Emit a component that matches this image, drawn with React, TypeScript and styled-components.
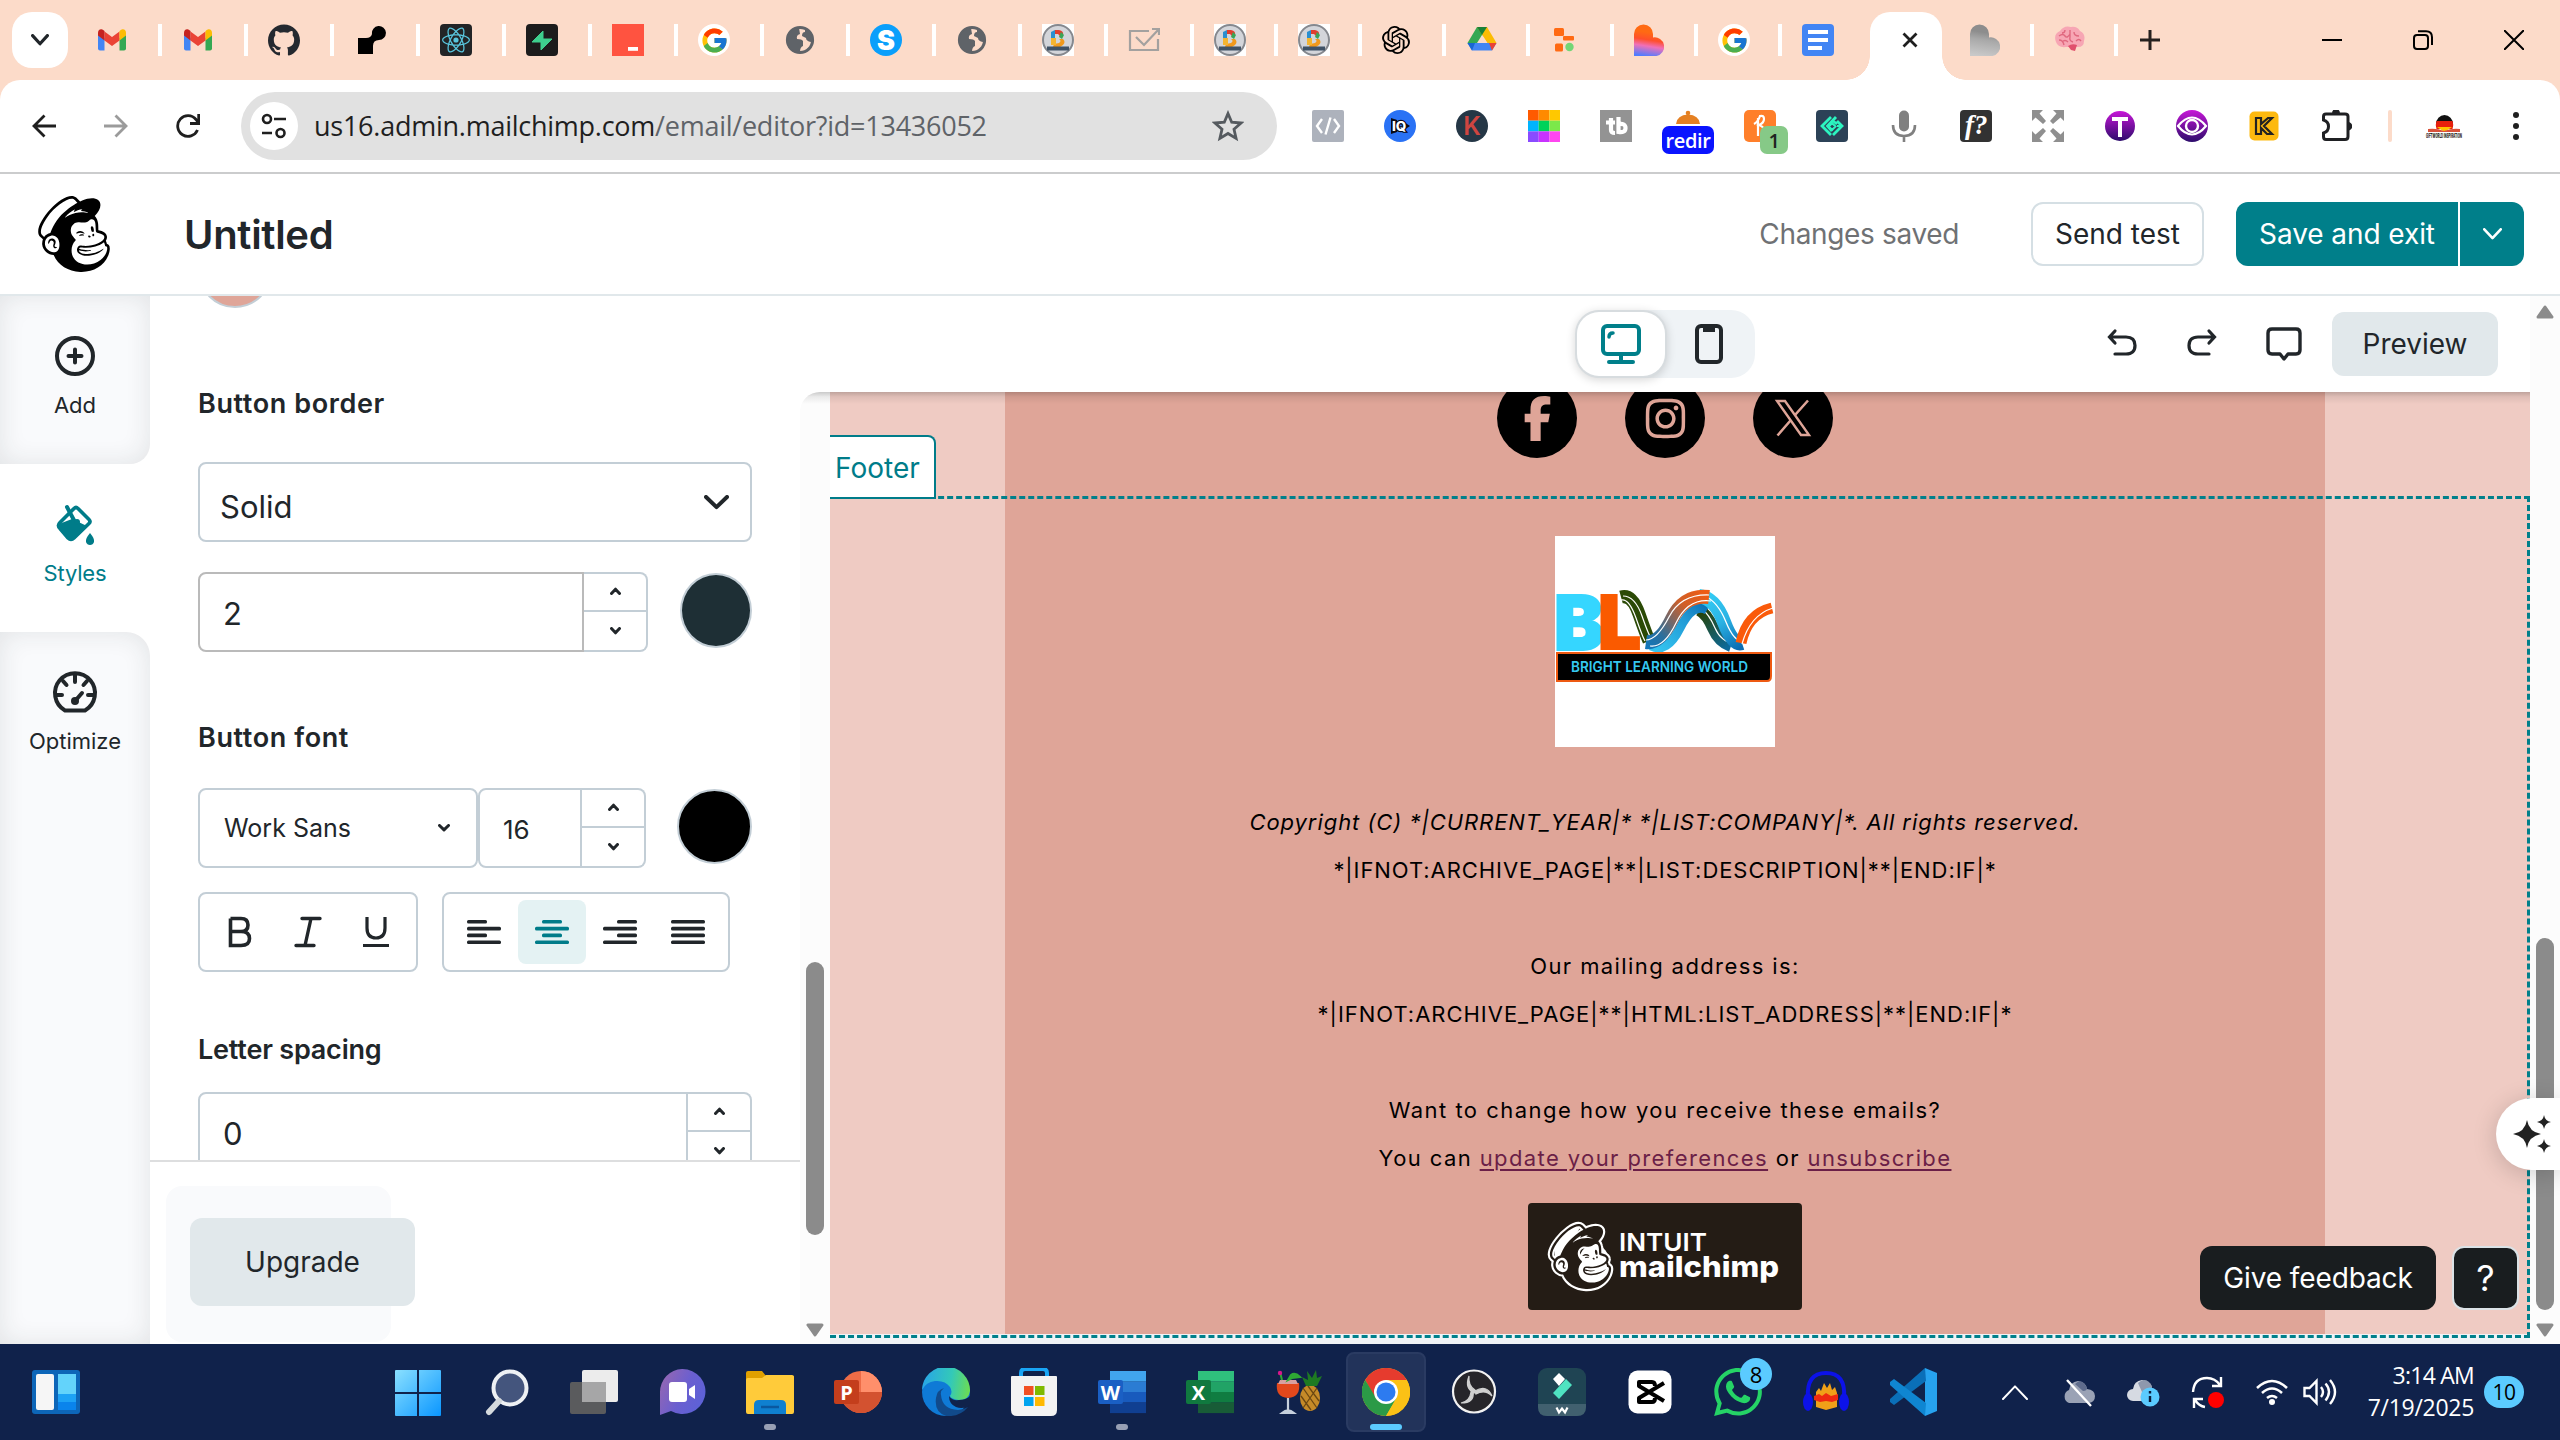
import React from 'react';
import styled, { createGlobalStyle, css } from 'styled-components';
import { FaFacebookF, FaInstagram } from 'react-icons/fa6';
import { FcGoogle } from 'react-icons/fc';
import { SiMailchimp, SiGithub, SiReact, SiOpenai, SiWhatsapp } from 'react-icons/si';

const ui = `Inter, "Liberation Sans", sans-serif`;
const sys = `"Open Sans", "Noto Sans", sans-serif`;
const teal = '#007c89';
const ink = '#21262a';
const line = '#c3ced6';
const peach = '#fcdbc9';

const Global = createGlobalStyle`
  * { box-sizing: border-box; }
  html, body { margin: 0; padding: 0; background: #fff; overflow: hidden; }
  svg { display: block; flex: none; }
`;

const Page = styled.div`
  width: 2560px;
  height: 1440px;
  display: flex;
  flex-direction: column;
  overflow: hidden;
  background: #fff;
  color: ${ink};
  font-family: ${ui};
`;

const Label = styled.span<{ $size: number; $ls?: number; $weight?: number; $color?: string }>`
  font-size: ${p => p.$size}px;
  letter-spacing: ${p => p.$ls ?? 0}px;
  font-weight: ${p => p.$weight ?? 400};
  color: ${p => p.$color ?? 'inherit'};
  white-space: nowrap;
`;

/* ---------- browser tabs ---------- */

const TabStrip = styled.div`
  display: flex;
  align-items: center;
  height: 80px;
  flex: none;
  background: ${peach};
  padding-left: 12px;
`;

const TabSearch = styled.div`
  width: 56px;
  height: 56px;
  border-radius: 20px;
  background: #fff;
  display: flex;
  align-items: center;
  justify-content: center;
  margin-right: 8px;
`;

const Tab = styled.div<{ $w: number; $last?: boolean }>`
  width: ${p => p.$w}px;
  height: 32px;
  flex: none;
  padding-left: 20px;
  display: flex;
  align-items: center;
  border-right: 4px solid ${p => (p.$last ? 'transparent' : '#fff')};
`;

const ActiveTab = styled.div`
  position: relative;
  align-self: flex-end;
  width: 72px;
  height: 68px;
  flex: none;
  margin: 0 8px 0 4px;
  padding-left: 8px;
  background: #fff;
  border-radius: 20px 20px 0 0;
  display: flex;
  align-items: center;
  justify-content: center;
  padding-bottom: 12px;
  &::before, &::after {
    content: '';
    position: absolute;
    bottom: 0;
    width: 24px;
    height: 24px;
  }
  &::before { left: -24px; background: radial-gradient(circle at 0 0, transparent 23.5px, #fff 24px); }
  &::after { right: -24px; background: radial-gradient(circle at 100% 0, transparent 23.5px, #fff 24px); }
`;

const NewTab = styled.div`
  margin-left: 22px;
`;

const WindowControls = styled.div`
  margin-left: auto;
  margin-right: 36px;
  display: flex;
  gap: 71px;
`;

const Favicon = styled.div<{ $bg?: string; $r?: number }>`
  width: 32px;
  height: 32px;
  flex: none;
  border-radius: ${p => p.$r ?? 4}px;
  background: ${p => p.$bg ?? 'transparent'};
  display: flex;
  align-items: center;
  justify-content: center;
  overflow: hidden;
`;

const Svg = ({ s = 32, h, vb = '0 0 32 32', children }: any) => (
  <svg width={s} height={h ?? s} viewBox={vb} fill="none">{children}</svg>
);

const Gmail = () => (
  <Svg>
    <path d="M2 9v15.500q0 2 2 2h4.500V14z" fill="#4285f4" />
    <path d="M30 9v15.500q0 2-2 2h-4.500V14z" fill="#34a853" />
    <path d="M8.500 7.500 16 13l7.500-5.500v9L16 22l-7.500-5.500z" fill="#ea4335" />
    <path d="M2 9Q2 5 5.500 5.200q1.300.1 3 1.800v9.500L2 11.500z" fill="#c5221f" />
    <path d="M30 9q0-4-3.500-3.800-1.300.1-3 1.800v9.500l6.500-5z" fill="#fbbc04" />
  </Svg>
);

const Globe = () => (
  <Svg>
    <circle cx="16" cy="16" r="12.600" fill="none" stroke="#5f6368" strokeWidth="3" />
    <path d="M4 18q-1-12 11-14l1 6q-4 1-3 5 5 0 6 2v5q-3 1-3 6-9 1-12-10zM21 5q8 3 8 11l-2 2q-5-1-5-4l-4-2q0-4 3-4z" fill="#5f6368" />
  </Svg>
);

const Coin = () => (
  <Favicon $bg="#fff" $r={0}>
    <Svg>
      <circle cx="16" cy="16" r="15" fill="#d3d5da" stroke="#85888e" strokeWidth="2" />
      <path d="M9 8l4-2v15H9z" fill="#2a8fd0" />
      <path d="M13 6h4q5 1 4 5l-2 2-3-3h-3z" fill="#e03f2e" />
      <path d="M19 8l3 3-2 4-3-2z" fill="#3aa557" />
      <path d="M12 20l5-1q3-2 0-4h4q3 3 0 6l-3 2h-7z" fill="#f0991d" />
      <path d="M9 14h5v7H9z" fill="#f3b431" />
      <rect x="5" y="22.500" width="22" height="4" fill="#3f5266" />
    </Svg>
  </Favicon>
);

const Drive = () => (
  <Svg>
    <path d="M11 3h10l-5 9-7.500 14L1.500 19z" fill="#34a853" />
    <path d="M11 3h10l9.500 16h-9z" fill="#fbbc04" />
    <path d="M1.500 19h29L26 26.500H6z" fill="#4285f4" />
    <path d="M23 19h7.500L26 26.500z" fill="#ea4335" />
    <path d="M16 11l5 8H11z" fill={peach} />
    <path d="M1.500 19H9l-3 7.500z" fill="#1967d2" />
    <path d="M11 3h10l-5 8z" fill="#188038" />
  </Svg>
);

const Heart = ({ gray }: { gray?: boolean }) => (
  <Svg>
    <defs>
      <linearGradient id={gray ? 'hg' : 'hc'} x1="0.500" y1="0" x2="0.350" y2="1">
        <stop offset="0.250" stopColor={gray ? '#8d8d8d' : '#ff6a13'} />
        <stop offset="0.480" stopColor={gray ? '#a8a8a8' : '#ff4f2b'} />
        <stop offset="0.680" stopColor={gray ? '#b5b5b5' : '#f070b8'} />
        <stop offset="1" stopColor={gray ? '#c9c9c9' : '#4f7cff'} />
      </linearGradient>
    </defs>
    <path d="M0 32V10a9.500 9.500 0 0 1 19 0v3.500a9.400 9.400 0 0 1 3.500 18.500z" fill={`url(#${gray ? 'hg' : 'hc'})`} />
  </Svg>
);

const favicons: Record<string, React.ReactNode> = {
  gmail: <Gmail />,
  github: <SiGithub size={32} color="#24292f" />,
  resume: <Svg><path d="M4 14h8q5 0 6-4a7 7 0 1 1 7 6q-6 0-6 6v8H4z" fill="#000" /></Svg>,
  react: <Favicon $bg="#222426"><SiReact size={28} color="#58c4dc" /></Favicon>,
  supa: <Favicon $bg="#1c1c1c"><Svg><path d="M17 7v8h9L15 26v-8H6z" fill="#3ecf8e" stroke="#3ecf8e" strokeWidth="1" strokeLinejoin="round" /></Svg></Favicon>,
  red: <Favicon $bg="#ff5340" $r={0}><Svg><path d="M16 23h10v3.800H16z" fill="#fff" /></Svg></Favicon>,
  google: <Favicon $bg="#fff" $r={16}><FcGoogle size={29} /></Favicon>,
  globe: <Globe />,
  s: <Favicon $bg="#0a9ffb" $r={16}><Label $size={27} $weight={900} $color="#fff">S</Label></Favicon>,
  coin: <Coin />,
  check: <Svg><path d="M21 7H2v19h28V15M8 13l8 8L31 5M24 5h7v6" stroke="#a3a19f" strokeWidth="2.200" /></Svg>,
  gpt: <SiOpenai size={28} color="#000" />,
  drive: <Drive />,
  hub: <Svg><rect x="4" y="4" width="10" height="8" rx="1.500" fill="#ff6a13" /><rect x="13" y="12" width="11" height="4.500" rx="1" fill="#ff6a13" /><rect x="5" y="19.500" width="8" height="8" rx="1.500" fill="#ff6a13" /><circle cx="19.500" cy="23" r="4.200" fill="#72d676" /></Svg>,
  heart: <Heart />,
  docs: <Favicon $bg="#4285f4"><Svg><path d="M6 8h20M6 16h20M6 24h14" stroke="#fff" strokeWidth="4" /></Svg></Favicon>,
};

const wideTabs = ['gmail', 'gmail', 'github', 'resume', 'react', 'supa', 'red', 'google', 'globe', 's', 'globe', 'coin', 'check'];
const narrowTabs = ['coin', 'coin', 'gpt', 'drive', 'hub', 'heart', 'google', 'docs'];

const Brain = () => (
  <Svg>
    <path d="M2 18Q-1 10 6 7q4-6 11-4 6-1 9 4 6 3 4 10 0 6-6 6H12Q4 24 2 18z" fill="#f7a6b4" />
    <path d="M14 22q4-3 9-1l-2 6-4-1z" fill="#e0506d" />
    <path d="M5 12q4-3 6 0t5-2M8 18q3-3 6 0M16 6v7q-1 4 3 5M20 8q0 4 5 4M22 17q3-3 5 0M11 6q0 3-3 3M5 16q4 0 5 5" stroke="#e0687f" strokeWidth="1.400" />
  </Svg>
);

/* ---------- address toolbar ---------- */

const ToolbarBack = styled.div`
  flex: none;
  background: ${peach};
`;

const Toolbar = styled.div`
  height: 94px;
  background: #fff;
  border-bottom: 2px solid #cbcccd;
  border-radius: 20px 20px 0 0;
  padding: 0 41px 0 32px;
  display: flex;
  align-items: center;
`;

const NavButtons = styled.div`
  display: flex;
  gap: 48px;
`;

const AddressBar = styled.div`
  width: 1036px;
  height: 68px;
  margin-left: 41px;
  border-radius: 34px;
  background: #e1e1e1;
  display: flex;
  align-items: center;
  padding: 0 33px 0 9px;
  font-family: ${sys};
`;

const SiteInfo = styled.div`
  width: 48px;
  height: 48px;
  border-radius: 50%;
  background: #fff;
  display: flex;
  align-items: center;
  justify-content: center;
  margin-right: 16px;
`;

const Url = styled.span`
  font-size: 27px;
  letter-spacing: -0.25px;
  color: #5f6368;
  flex: 1;
  padding-bottom: 2px;
  b { font-weight: 400; color: #1f1f1f; }
`;

const Extensions = styled.div`
  display: flex;
  gap: 40px;
  margin-left: 35px;
`;

const Ext = styled.div`
  position: relative;
  width: 32px;
  height: 32px;
`;

const ExtBadge = styled.span<{ $left: number; $w: number; $bg: string; $color: string }>`
  position: absolute;
  top: 16px;
  left: ${p => p.$left}px;
  width: ${p => p.$w}px;
  height: 28px;
  border-radius: 7px;
  background: ${p => p.$bg};
  color: ${p => p.$color};
  font: 600 20px/29px ${sys};
  letter-spacing: -0.4px;
  text-align: center;
`;

const ToolbarRule = styled.div`
  width: 4px;
  height: 32px;
  border-radius: 2px;
  background: ${peach};
  margin: 0 33px 0 36px;
`;

const rainbow = ['#ff5a00', '#ff8a00', '#ffc800', '#00b4ff', '#00d25a', '#7be84a', '#8a4bff', '#c832ff', '#ff46f0'];

const exts: React.ReactNode[] = [
  <Favicon $bg="#adb2bc" $r={2}><Svg><path d="M10 9 5 16l5 7M22 9l5 7-5 7M18.500 7.500l-5 17" stroke="#fff" strokeWidth="2.400" /></Svg></Favicon>,
  <Favicon $bg="#2a72f5" $r={16}><Svg><path d="M7 8v16l6-2V10zM20 12l6 4-6 4z" fill="#0a0a14" /><text x="8" y="21" fontFamily={ui} fontWeight="800" fontSize="13.500" fill="#fff" stroke="#0a0a14" strokeWidth="2.400" paintOrder="stroke">IQ</text></Svg></Favicon>,
  <Favicon $bg="#253746" $r={16}><Label $size={25} $weight={600} $color="#cf4540">K</Label></Favicon>,
  <Svg>{rainbow.map((c, i) => <rect key={c} x={(i % 3) * 10.670} y={Math.floor(i / 3) * 10.670} width="10.700" height="10.700" fill={c} />)}</Svg>,
  <Favicon $bg="#939393" $r={0}><Svg><path d="M11 8v12q0 3 4 3M6 12.500h9M18.500 7v15q7 1 7-4t-7-4" stroke="#fff" strokeWidth="4.200" /></Svg></Favicon>,
  <><Svg><path d="M4 14Q5 5 16 4.500 27 5 28 14z" fill="#e58022" /><circle cx="16" cy="3" r="2.300" fill="#e58022" /></Svg><ExtBadge $left={-10} $w={52} $bg="#0a14ff" $color="#fff">redir</ExtBadge></>,
  <><Favicon $bg="#ff7f2a" $r={5}><Svg><path d="M10 14q4-2 6-8 4-1 4 3t-5 6q6 2 5 7M14 8v18" stroke="#fff" strokeWidth="2.200" /></Svg></Favicon><ExtBadge $left={16} $w={28} $bg="#86c987" $color="#1f2420">1</ExtBadge></>,
  <Favicon $bg="#2c4257" $r={4}><Svg><path d="M15 7 6 16l9 9M20 7l-8.500 9 4.500 5M17 25l9-9-5-5M21 14l-4-3" stroke="#2cf5c0" strokeWidth="2.800" /><path d="M16 13l3.500 3.500L16 20l-3-3.500zM21 16h6" stroke="#2cf5c0" strokeWidth="2" /></Svg></Favicon>,
  <Svg><rect x="11" y="0.500" width="10" height="21" rx="5" fill="#808080" /><path d="M5 15q0 11 11 11t11-11M16 26v6" stroke="#808080" strokeWidth="2.600" /></Svg>,
  <Favicon $bg="#323232" $r={4}><Svg><text x="5" y="24" fontFamily='"Liberation Serif", serif' fontStyle="italic" fontWeight="700" fontSize="27" fill="#fff">f?</text></Svg></Favicon>,
  <Svg><path d="M0 0h11L7.500 3.500 14 11l-3 3-7.500-6.500L0 11zM32 0v11l-3.500-3.500L21 14l-3-3 6.500-7.500L21 0zM0 32V21l3.500 3.500L11 18l3 3-6.500 7.500L11 32zM32 32H21l3.500-3.500L18 21l3-3 7.500 6.500L32 21z" fill="#8f8f8f" /></Svg>,
  <Svg><defs><linearGradient id="pu" x1="0" y1="0" x2="0" y2="1"><stop stopColor="#c716d8" /><stop offset="1" stopColor="#2c0c6b" /></linearGradient></defs><circle cx="16" cy="16" r="15" fill="url(#pu)" /><path d="M8 9h16M16 9v18" stroke="#fff" strokeWidth="4" /></Svg>,
  <Svg><circle cx="16" cy="16" r="16" fill="url(#pu)" /><path d="M2 16Q9 7.500 16 7.500T30 16q-7 8.500-14 8.500T2 16z" stroke="#fff" strokeWidth="2.200" /><circle cx="16" cy="16" r="6" stroke="#fff" strokeWidth="2.400" /></Svg>,
  <Svg><rect x="1.500" y="1.500" width="29" height="29" rx="5" fill="#fdb90f" /><path d="M8 8h5v6l7-6h4l-8 8 8 8h-5l-6-6v6H8z" stroke="#222" strokeWidth="2.200" /></Svg>,
  <Svg><path d="M3.500 10V6.500Q3.500 4 6 4h19q3 0 3 2.500v20q0 3-3 3H6q-2.500 0-2.500-3V23q5-1.500 5-6.500T3.500 10z" stroke="#1f2023" strokeWidth="3" /><path d="M12 4q0-5 4-5t4 5zM28 12a4.200 4.200 0 0 1 0 8.500z" fill="#1f2023" /></Svg>,
];

const Avatar = () => (
  <svg width="38" height="24" viewBox="0 0 38 24">
    <path d="M11 10a8.500 9 0 0 1 17 0v3H11z" fill="#111" />
    <path d="M11.500 7h16q1.500 4 0 8h-16q-1.500-4 0-8z" fill="#e8200c" />
    <path d="M12 13h15l-7.500 5z" fill="#ffc400" />
    <path d="M3 15q9-1 16 2 8-3 16-2v3H3z" fill="#d9523a" />
    <text x="1" y="23.500" fontFamily={ui} fontWeight="800" fontSize="6.500" textLength="36" lengthAdjust="spacingAndGlyphs" fill="#2a1d16">GIFTWORLD INSPIRATION</text>
  </svg>
);

/* ---------- editor header ---------- */

const Header = styled.div`
  height: 122px;
  flex: none;
  border-bottom: 2px solid #e1e8eb;
  display: flex;
  align-items: center;
  padding: 0 36px;
`;

const Brand = styled.div`
  width: 76px;
  margin-right: 72px;
`;

const Spacer = styled.div`
  flex: 1;
`;

const OutlineButton = styled.div`
  height: 64px;
  width: 173px;
  margin: 0 32px 0 72px;
  border: 2px solid #d5dfe4;
  border-radius: 12px;
  display: flex;
  align-items: center;
  justify-content: center;
`;

const SplitButton = styled.div`
  display: flex;
  height: 64px;
  color: #fff;
  border-radius: 12px;
  overflow: hidden;
  gap: 2px;
`;

const SplitPart = styled.div<{ $w: number }>`
  width: ${p => p.$w}px;
  background: #007f8a;
  display: flex;
  align-items: center;
  justify-content: center;
`;

/* ---------- body ---------- */

const Body = styled.div`
  position: relative;
  display: flex;
  height: 1048px;
  flex: none;
`;

const Rail = styled.div`
  width: 150px;
  display: flex;
  flex-direction: column;
  flex: none;
`;

const RailItem = styled.div<{ $kind: 'top' | 'active' | 'rest' }>`
  height: ${p => (p.$kind === 'rest' ? 712 : 168)}px;
  display: flex;
  flex-direction: column;
  align-items: center;
  padding-top: 36px;
  gap: 10px;
  font-size: 22px;
  line-height: 30px;
  color: ${ink};
  background: #f9fafc;
  box-shadow: inset 0 0 26px rgba(33, 50, 50, 0.11);
  ${p => p.$kind === 'top' && css`border-bottom-right-radius: 20px;`}
  ${p => p.$kind === 'rest' && css`border-top-right-radius: 24px;`}
  ${p => p.$kind === 'active' && css`background: #fff; box-shadow: none; color: ${teal}; letter-spacing: -0.2px;`}
`;

const Panel = styled.div`
  width: 650px;
  flex: none;
  display: flex;
  flex-direction: column;
`;

const Form = styled.div`
  height: 864px;
  flex: none;
  overflow: hidden;
  padding: 0 48px;
`;

const Swatch = styled.div<{ $w: number; $h: number; $color: string }>`
  width: ${p => p.$w}px;
  height: ${p => p.$h}px;
  flex: none;
  border-radius: 50%;
  background: ${p => p.$color};
  border: 2px solid ${line};
`;

const ClippedSwatch = styled(Swatch)`
  margin-top: -62px;
`;

const RaisedSwatch = styled(Swatch)`
  margin-bottom: 3px;
`;

const FieldTitle = styled.div<{ $top: number; $ls?: number }>`
  margin-top: ${p => p.$top}px;
  height: 36px;
  line-height: 36px;
  font-size: 27px;
  font-weight: 600;
  letter-spacing: ${p => p.$ls ?? 0}px;
`;

const Row = styled.div<{ $top: number; $gap?: number; $between?: boolean }>`
  display: flex;
  align-items: center;
  margin-top: ${p => p.$top}px;
  gap: ${p => p.$gap ?? 0}px;
  ${p => p.$between && css`justify-content: space-between;`}
`;

const Select = styled.div<{ $w: number; $pl: number; $pr: number }>`
  width: ${p => p.$w}px;
  height: 80px;
  border: 2px solid ${line};
  border-radius: 8px;
  display: flex;
  align-items: center;
  justify-content: space-between;
  padding: 0 ${p => p.$pr}px 0 ${p => p.$pl}px;
`;

const SelectText = styled(Label)<{ $drop?: number }>`
  padding-top: ${p => p.$drop ?? 0}px;
`;

const NumberField = styled.div<{ $w: number }>`
  width: ${p => p.$w}px;
  height: 80px;
  display: flex;
`;

const NumberInput = styled.div<{ $focus?: boolean }>`
  flex: 1;
  border: 2px solid ${p => (p.$focus ? '#bababa' : line)};
  border-radius: 8px 0 0 8px;
  padding: 2px 0 0 23px;
  display: flex;
  align-items: center;
`;

const Stepper = styled.div`
  width: 64px;
  border: 2px solid ${line};
  border-left: 0;
  border-radius: 0 8px 8px 0;
  display: flex;
  flex-direction: column;
`;

const Step = styled.div<{ $first?: boolean }>`
  flex: 1;
  display: flex;
  align-items: center;
  justify-content: center;
  ${p => p.$first && css`flex: 0 0 38px; padding-bottom: 2px; border-bottom: 2px solid ${line};`}
`;

const Group = styled.div<{ $w: number }>`
  width: ${p => p.$w}px;
  height: 80px;
  border: 2px solid ${line};
  border-radius: 8px;
  display: flex;
  align-items: center;
  justify-content: center;
`;

const GroupItem = styled.div<{ $on?: boolean }>`
  width: 68px;
  height: 64px;
  border-radius: 8px;
  display: flex;
  align-items: center;
  justify-content: center;
  background: ${p => (p.$on ? '#e4f2f3' : 'transparent')};
`;

const PanelFooter = styled.div`
  height: 184px;
  flex: none;
  border-top: 2px solid #dddedf;
  padding: 24px 16px 0;
`;

const UpgradeShade = styled.div`
  width: 225px;
  height: 156px;
  border-radius: 16px;
  background: #f9fafc;
  padding: 32px 0 0 24px;
`;

const UpgradeButton = styled.div`
  width: 225px;
  height: 88px;
  border-radius: 12px;
  background: #e1e8eb;
  display: flex;
  align-items: center;
  justify-content: center;
`;

const ScrollTrack = styled.div`
  width: 30px;
  flex: none;
  background: #fcfcfc;
  display: flex;
  flex-direction: column;
  align-items: center;
`;

const TrackStart = styled.div`
  height: 14px;
  margin-top: 9px;
`;

const Thumb = styled.div<{ $top: number; $h: number }>`
  width: 18px;
  height: ${p => p.$h}px;
  margin-top: ${p => p.$top}px;
  border-radius: 9px;
  background: #8b8b8b;
`;

const TrackEnd = styled.div`
  margin-top: auto;
  margin-bottom: 7px;
`;

const Workspace = styled.div`
  width: 1730px;
  flex: none;
  display: flex;
  flex-direction: column;
`;

const CanvasBar = styled.div`
  height: 96px;
  flex: none;
  display: flex;
  align-items: center;
  padding: 0 32px 0 776px;
`;

const Viewport = styled.div`
  position: relative;
  height: 952px;
  display: flex;
  border-top-left-radius: 20px;
  overflow: hidden;
  &::after {
    content: '';
    position: absolute;
    left: 0;
    right: 0;
    top: 0;
    height: 12px;
    background: linear-gradient(rgba(0, 0, 0, 0.2), rgba(0, 0, 0, 0.07) 40%, transparent);
  }
`;

const DeviceToggle = styled.div`
  width: 179px;
  height: 68px;
  border-radius: 24px;
  background: #eff3f6;
  display: flex;
  align-items: center;
`;

const Device = styled.div<{ $on?: boolean }>`
  width: ${p => (p.$on ? 88 : 88)}px;
  height: 64px;
  margin-left: ${p => (p.$on ? 1 : 0)}px;
  border-radius: 22px;
  display: flex;
  align-items: center;
  justify-content: center;
  ${p => p.$on && css`background: #fff; box-shadow: 0 0 0 2px #d7dcdf, 0 2px 10px 2px rgba(0, 0, 0, 0.16);`}
`;

const History = styled.div`
  display: flex;
  align-items: center;
  gap: 48px;
  margin-right: 30px;
`;

const PreviewButton = styled.div`
  width: 166px;
  height: 64px;
  border-radius: 12px;
  background: #e1e8eb;
  display: flex;
  align-items: center;
  justify-content: center;
`;

const Stage = styled.div`
  position: relative;
  width: 1700px;
  flex: none;
  height: 952px;
  overflow: hidden;
  background: #f0f3f6;
`;

const EmailBack = styled.div`
  height: 942px;
  background: #efcbc3;
  padding-left: 175px;
`;

const Email = styled.div`
  width: 1320px;
  height: 942px;
  background: #dfa598;
  display: flex;
  flex-direction: column;
  align-items: center;
`;

const SocialRow = styled.div`
  display: flex;
  gap: 48px;
  margin-top: -14px;
`;

const Social = styled.div`
  width: 80px;
  height: 80px;
  border-radius: 50%;
  background: #000;
  color: #dfa598;
  display: flex;
  align-items: center;
  justify-content: center;
`;

const LogoCard = styled.div`
  margin-top: 78px;
  width: 220px;
  height: 211px;
  background: #fff;
`;

const FooterText = styled.div`
  margin-top: 51px;
  color: #000;
  text-align: center;
  font-size: 22px;
  line-height: 48px;
`;

const TextLine = styled.div<{ $ls: number; $italic?: boolean }>`
  height: 48px;
  letter-spacing: ${p => p.$ls}px;
  font-style: ${p => (p.$italic ? 'italic' : 'normal')};
  white-space: nowrap;
`;

const Link = styled.span`
  color: #6b1f47;
  text-decoration: underline;
  text-decoration-thickness: 2px;
  text-underline-offset: 3px;
`;

const MailchimpBadge = styled.div`
  margin-top: 21px;
  width: 274px;
  height: 107px;
  border-radius: 4px;
  background: #241c15;
`;

const SelectionFrame = styled.div`
  position: absolute;
  left: 0;
  right: 0;
  top: 104px;
  height: 842px;
  border: 3px dashed #00808b;
  border-left: 0;
`;

const SelectionTag = styled.div`
  position: absolute;
  left: 0;
  top: 43px;
  width: 106px;
  height: 64px;
  background: #fff;
  border: 2px solid ${teal};
  border-left: 0;
  border-top-right-radius: 8px;
  padding-left: 5px;
  line-height: 62px;
  color: ${teal};
`;

const HelpBar = styled.div`
  position: absolute;
  right: 11px;
  bottom: 34px;
  display: flex;
  gap: 16px;
  color: #fff;
`;

const DarkButton = styled.div<{ $w: number; $ring?: boolean }>`
  width: ${p => p.$w}px;
  height: 64px;
  border-radius: 12px;
  background: #191d1f;
  ${p => p.$ring && css`border: 2px solid #dbe2e6;`}
  display: flex;
  align-items: center;
  justify-content: center;
`;

const Assistant = styled.div`
  position: absolute;
  right: 0;
  top: 802px;
  width: 64px;
  height: 72px;
  border-radius: 36px 0 0 36px;
  background: #fff;
  box-shadow: 0 4px 24px rgba(0, 0, 0, 0.18);
  display: flex;
  align-items: center;
  padding-left: 17px;
`;

const Chevron = ({ w, h, sw, up, color = ink }: any) => (
  <svg width={w} height={h} viewBox={`0 0 ${w} ${h}`} fill="none">
    <path
      d={up ? `M${sw / 2} ${h - sw / 2}L${w / 2} ${sw / 1.4}L${w - sw / 2} ${h - sw / 2}` : `M${sw / 2} ${sw / 2}L${w / 2} ${h - sw / 1.4}L${w - sw / 2} ${sw / 2}`}
      stroke={color} strokeWidth={sw} strokeLinecap="round" strokeLinejoin="round"
    />
  </svg>
);

const Steps = () => (
  <Stepper>
    <Step $first><Chevron w={11} h={8} sw={3} up /></Step>
    <Step><Chevron w={11} h={8} sw={3} /></Step>
  </Stepper>
);

const Triangle = ({ up }: { up?: boolean }) => (
  <svg width="18" height="14" viewBox="0 0 18 14">
    <path d={up ? 'M9 2 16 12H2z' : 'M9 12 2 2h14z'} fill="#8b8b8b" stroke="#8b8b8b" strokeWidth="3" strokeLinejoin="round" />
  </svg>
);

const AlignIcon = ({ rows, color = ink }: { rows: [number, number][]; color?: string }) => (
  <svg width="34" height="26" viewBox="0 0 34 26">
    {rows.map(([x, w], i) => <rect key={i} x={x} y={1 + i * 6.8} width={w} height="3.600" rx="1.500" fill={color} />)}
  </svg>
);

const BlwLogo = () => (
  <svg width="220" height="211" viewBox="0 0 220 211" fill="none">
    <defs>
      <linearGradient id="rise" x1="90" y1="112" x2="150" y2="56" gradientUnits="userSpaceOnUse">
        <stop stopColor="#0f78bd" /><stop offset="0.250" stopColor="#2a6f9e" /><stop offset="0.700" stopColor="#cf5f28" /><stop offset="1" stopColor="#ee5c14" />
      </linearGradient>
      <linearGradient id="low" x1="100" y1="112" x2="150" y2="66" gradientUnits="userSpaceOnUse">
        <stop stopColor="#35c5f0" /><stop offset="0.600" stopColor="#219bd6" /><stop offset="1" stopColor="#0b6fb5" />
      </linearGradient>
      <linearGradient id="fall" x1="150" y1="58" x2="185" y2="112" gradientUnits="userSpaceOnUse">
        <stop stopColor="#33cdf5" /><stop offset="0.500" stopColor="#2bb3e4" /><stop offset="1" stopColor="#0a6cb2" />
      </linearGradient>
      <linearGradient id="deep" x1="148" y1="76" x2="172" y2="112" gradientUnits="userSpaceOnUse">
        <stop stopColor="#27440a" /><stop offset="1" stopColor="#0c6a9a" />
      </linearGradient>
    </defs>
    <text x="-1" y="114" fontFamily={ui} fontWeight="900" fontSize="76" textLength="50" lengthAdjust="spacingAndGlyphs" fill="#35d6ff" stroke="#35d6ff" strokeWidth="2">B</text>
    <text x="43" y="113" fontFamily={ui} fontWeight="900" fontSize="74" textLength="43" lengthAdjust="spacingAndGlyphs" fill="#fa5a00" stroke="#fa5a00" strokeWidth="2">L</text>
    <path d="M66 61Q77 58 84 78T94 105" stroke="#2b4a06" strokeWidth="13" />
    <path d="M68 60Q80 60 87 80T97 104M66 64Q74 62 81 82T90 105" stroke="#fff" strokeWidth="1.200" />
    <path d="M144 74Q152 78 158 92T176 110" stroke="url(#deep)" strokeWidth="12" />
    <path d="M146 72Q154 78 160 92T180 108" stroke="#fff" strokeWidth="1.200" />
    <path d="M96 110Q112 118 125 92T152 74" stroke="url(#low)" strokeWidth="9" />
    <path d="M144 60Q160 62 169 86T187 107" stroke="url(#fall)" strokeWidth="14" />
    <path d="M150 60Q163 66 171 86T189 106" stroke="#fff" strokeWidth="1.300" />
    <path d="M91 106Q105 108 117 83T154 61" stroke="url(#rise)" strokeWidth="14" />
    <path d="M91 104Q102 104 114 81T154 59" stroke="#fff" strokeWidth="1.200" />
    <path d="M95 110Q109 112 121 87T156 65" stroke="#fff" strokeWidth="1.200" />
    <path d="M186 107Q192 78 217 72" stroke="#fa5a0a" strokeWidth="11" />
    <path d="M187 108Q195 79 218 72" stroke="#fff" strokeWidth="1.200" />
    <path d="M2 117h214v23q0 5-4 5H2z" fill="#000" stroke="#ee5a12" strokeWidth="2" />
    <text x="16" y="135.500" fontFamily={ui} fontWeight="600" fontSize="15" textLength="177" lengthAdjust="spacingAndGlyphs" fill="#35c8f0">BRIGHT LEARNING WORLD</text>
  </svg>
);

const BadgeArt = () => (
  <svg width="274" height="107" viewBox="0 0 274 107">
    <SiMailchimp x={20} y={21} size={65} color="#fff" stroke="#fff" strokeWidth={1.6} style={{ overflow: 'visible' }} />
    <path d="M27 56Q24 30 42 24l10 1-18 26-3 12z" fill="#fff" />
    <ellipse cx="66" cy="62" rx="16" ry="21" fill="#fff" />
    <circle cx="32" cy="63" r="7" fill="#fff" />
    <SiMailchimp x={20} y={21} size={65} color="#241c15" />
    <text x="91" y="48" fontFamily={ui} fontWeight="600" fontSize="24" textLength="88" lengthAdjust="spacingAndGlyphs" fill="#fff">INTUIT</text>
    <text x="91" y="73.500" fontFamily={ui} fontWeight="800" fontSize="29" textLength="160" lengthAdjust="spacingAndGlyphs" fill="#fff">mailchimp</text>
  </svg>
);

/* ---------- taskbar ---------- */

const Taskbar = styled.div`
  height: 96px;
  flex: none;
  background: #10224b;
  display: flex;
  align-items: center;
  padding-left: 32px;
  color: #fff;
  font-family: ${sys};
`;

const Apps = styled.div`
  display: flex;
  gap: 8px;
  margin-left: 298px;
`;

const AppSlot = styled.div<{ $active?: boolean }>`
  position: relative;
  width: 80px;
  height: 80px;
  border-radius: 8px;
  display: flex;
  align-items: center;
  justify-content: center;
  ${p => p.$active && css`background: #22335a; border: 2px solid #2a3b62;`}
`;

const Running = styled.span<{ $active?: boolean }>`
  position: absolute;
  bottom: ${p => (p.$active ? 0 : 2)}px;
  width: ${p => (p.$active ? 32 : 12)}px;
  height: 6px;
  border-radius: 3px;
  background: ${p => (p.$active ? '#5bcbff' : '#98a0b4')};
`;

const AppCount = styled.span`
  position: absolute;
  top: 6px;
  left: 42px;
  width: 32px;
  height: 32px;
  border-radius: 50%;
  background: #5bcbff;
  color: #000;
  font-size: 22px;
  line-height: 32px;
  text-align: center;
`;

const Tray = styled.div`
  display: flex;
  align-items: center;
  margin-left: auto;
  margin-right: 36px;
`;

const TrayIcon = styled.div<{ $ml: number }>`
  margin-left: ${p => p.$ml}px;
`;

const Clock = styled.div`
  width: 125px;
  display: flex;
  flex-direction: column;
  align-items: flex-end;
  line-height: 32px;
  margin: 0 10px 0 12px;
  padding-bottom: 2px;
`;

const Notice = styled.div`
  width: 40px;
  height: 32px;
  border-radius: 16px;
  background: #5bcbff;
  color: #000;
  font-size: 21px;
  line-height: 32px;
  letter-spacing: -0.5px;
  text-align: center;
`;

const Ic = ({ children }: any) => <svg width="48" height="48" viewBox="0 0 48 48" fill="none">{children}</svg>;

const OfficeIcon = ({ c, dark, letter }: { c: string[]; dark: string; letter: string }) => (
  <Ic>
    {c.map((k, i) => <rect key={i} x="12" y={3 + i * 10.5} width="36" height="10.600" fill={k} />)}
    <rect x="0" y="12" width="25" height="24" rx="2" fill={dark} />
    <text x="12.500" y="31.500" textAnchor="middle" fontFamily={sys} fontWeight="700" fontSize="20" fill="#fff">{letter}</text>
  </Ic>
);

type App = { icon: React.ReactNode; run?: boolean; active?: boolean; count?: number };
const apps: App[] = [
  { icon: <Ic><defs><linearGradient id="win" x1="0" y1="0" x2="1" y2="1"><stop stopColor="#8ae0ff" /><stop offset="1" stopColor="#0a96ff" /></linearGradient></defs><path d="M1 3q0-1 1-1h21v22H1zM25 2h21q1 0 1 1v21H25zM1 26h22v22H2q-1 0-1-1zM25 26h22v21q0 1-1 1H25z" fill="url(#win)" /></Ic> },
  { icon: <Ic><circle cx="28" cy="20" r="16.500" fill="#44557d" stroke="#eef1f4" strokeWidth="4" /><path d="M17 33 7 44" stroke="#d5dadd" strokeWidth="6" strokeLinecap="round" /></Ic> },
  { icon: <Ic><rect x="12" y="2" width="36" height="32" rx="2" fill="#ececec" /><rect x="0" y="14" width="36" height="32" rx="2" fill="#5a5b5d" /><rect x="12" y="14" width="24" height="20" fill="#a6a6a7" /></Ic> },
  { icon: <Ic><defs><linearGradient id="chat" x1="0" y1="0.300" x2="1" y2="0.800"><stop stopColor="#9266b4" /><stop offset="0.500" stopColor="#6a5fd0" /><stop offset="1" stopColor="#5a62d8" /></linearGradient></defs><path d="M24 1a23 22.500 0 1 1-11 42L2 47V24A23 23 0 0 1 24 1z" fill="url(#chat)" /><rect x="11" y="14" width="18" height="20" rx="3" fill="#fff" /><path d="M31 21l6-4v14l-6-4z" fill="#fff" /></Ic> },
  { icon: <Ic><path d="M0 5q0-2 2-2h14l4 5h28v10H0z" fill="#e0a000" /><path d="M0 12q0-2 2-2h14l4-3h26q2 0 2 2v35q0 2-2 2H2q-2 0-2-2z" fill="#ffcb3a" /><path d="M8 46V37q0-5 5-5h22q5 0 5 5v9z" fill="#0f80d0" /><path d="M15 39h18" stroke="#0a58a0" strokeWidth="2.500" /></Ic>, run: true },
  { icon: <Ic><circle cx="27" cy="24" r="21" fill="#ed6c47" /><path d="M27 3a21 21 0 0 1 21 21H27z" fill="#ff8f6b" /><path d="M6 24h42a21 21 0 0 1-42 0z" fill="#d35230" /><rect x="0" y="12" width="25" height="24" rx="2" fill="#c43e1c" /><text x="12.500" y="31.500" textAnchor="middle" fontFamily={sys} fontWeight="700" fontSize="20" fill="#fff">P</text></Ic> },
  { icon: <Ic><defs><linearGradient id="eg" x1="0" y1="0.400" x2="1" y2="0.500"><stop stopColor="#28a4e8" /><stop offset="0.600" stopColor="#33c9b8" /><stop offset="1" stopColor="#6bdc55" /></linearGradient></defs><circle cx="24" cy="24" r="24" fill="#0f7ad6" /><path d="M0 22A24 24 0 0 1 48 23q-1 9-11 9-8-1-9-4 3-4 0-9-5-7-15-6Q4 14 0 22z" fill="url(#eg)" /><path d="M19 27q1 14 17 15 5 0 10-3Q38 49 24 48 12 44 14 30q1-8 8-10-4 3-3 7z" fill="#114a8b" /><path d="M27 28q3 5 10 4 7 0 11-4v9l-3 2q-6 2-11 0-7-3-7-11z" fill="#10224b" /></Ic> },
  { icon: <Ic><path d="M11 10V5q0-4 4-4h18q4 0 4 4v5" stroke="#19a5f5" strokeWidth="4" /><path d="M1 9q0-1 1-1h44q1 0 1 1v33q0 6-6 6H7q-6 0-6-6z" fill="#f3f3f3" /><rect x="14" y="18" width="9.500" height="9" fill="#f25022" /><rect x="25" y="18" width="9.500" height="9" fill="#7fba00" /><rect x="14" y="29" width="9.500" height="9" fill="#00a4ef" /><rect x="25" y="29" width="9.500" height="9" fill="#ffb900" /></Ic> },
  { icon: <OfficeIcon c={['#41a5ee', '#2b7cd3', '#185abd', '#103f91']} dark="#1a5fc4" letter="W" />, run: true },
  { icon: <OfficeIcon c={['#2fbf7d', '#21a366', '#107c41', '#185c37']} dark="#10793f" letter="X" /> },
  { icon: <Ic><ellipse cx="36" cy="30" rx="10" ry="13" fill="#c58a28" /><path d="M29 20l14 20M43 20 29 40M34 18l11 15M27 28l10 14" stroke="#6b4712" strokeWidth="1.300" /><path d="M32 18l-4-9 6 3-1-9 5 7 4-8 1 8 5-2-5 10z" fill="#1e7a22" /><path d="M3 15h22q2 14-11 15Q1 29 3 15z" fill="#e2481c" /><path d="M4 16h20l-2-4H6z" fill="#d9a0a0" /><path d="M14 30v12M8 45q6-5 12 0z" stroke="#c6d0dc" strokeWidth="2.200" fill="#c6d0dc" /><path d="M8 12 6 4M14 12l3-5q4-3 9 2l-8 1z" stroke="#2faa34" strokeWidth="2" fill="#2faa34" /><circle cx="6" cy="5" r="2.200" fill="#d8168c" /></Ic> },
  { icon: <Ic><circle cx="24" cy="24" r="24" fill="#fbc116" /><path d="M3.200 12A24 24 0 0 1 44.800 12H24v12L13 30z" fill="#e63b2e" /><path d="M3.200 12A24 24 0 0 0 24 48l10.500-18L24 24l-10 6z" fill="#2b9a47" /><path d="M24 12h20.800A24 24 0 0 1 24 48l10.500-18z" fill="#fbc116" /><circle cx="24" cy="24" r="12" fill="#fff" /><circle cx="24" cy="24" r="9.500" fill="#2d7bf0" /></Ic>, run: true, active: true },
  { icon: <Ic><circle cx="24" cy="23.500" r="21" fill="#26252a" stroke="#f2f2f2" strokeWidth="2.200" /><path d="M25 25Q14 21 19 8q-1 10 6 14zM25 23q12-7 17 5-7-7-16-2zM23 23q2 12-12 12 9-2 10-11z" fill="#d0d0d0" stroke="#d0d0d0" strokeWidth="1.200" /></Ic> },
  { icon: <Ic><rect width="48" height="48" rx="9" fill="#1f4453" /><path d="M0 36h48v3q0 9-9 9H9q-9 0-9-9z" fill="#41606f" /><path d="M21 5l6 6-6 7-6-7z" fill="#fff" /><path d="M28 11l6 6-13 14-6-6z" fill="#4fe3c1" /><path d="M18.500 39.500l2.500 5 3-4 3 4 2.500-5" stroke="#fff" strokeWidth="2.200" /></Ic> },
  { icon: <Ic><rect x="2.500" y="2.500" width="43" height="43" rx="9" fill="#fff" /><path d="M38 15 13 30v4h13q3 0 3-4M38 33 13 18v-4h13q3 0 3 4" stroke="#000" strokeWidth="4" strokeLinejoin="round" /></Ic> },
  { icon: <SiWhatsapp size={48} color="#25d366" />, count: 8 },
  { icon: <Ic><path d="M6 30Q4 5 24 5t18 25" stroke="#0c12e8" strokeWidth="4" /><path d="M14 24l3-4 2 3 3-8 3 5 3-5 2 7 3-3 2 6v14l-11 3-10-3z" fill="#f0a018" /><path d="M12 28l5-2 3 2 4-3 5 3 7-2v6l-6 2-6-1-6 1-6-2z" fill="#ee2a10" /><ellipse cx="6" cy="34" rx="5" ry="9" fill="#0c12e8" /><ellipse cx="42" cy="34" rx="5" ry="9" fill="#0c12e8" /></Ic> },
  { icon: <Ic><path d="M35 0 47 5v38l-12 5z" fill="#27a3ef" /><path d="M35 0 0 31v3l4 3L36 13z" fill="#0a6fb8" /><path d="M35 48 0 17v-3l4-3 32 24z" fill="#0f86d2" /></Ic> },
];

export default function App() {
  return (
    <Page>
      <Global />
      <TabStrip>
        <TabSearch><Chevron w={18} h={12} sw={3.2} /></TabSearch>
        {wideTabs.map((k, i) => <Tab key={i} $w={86}>{favicons[k]}</Tab>)}
        {narrowTabs.map((k, i) => <Tab key={i} $w={84} $last={i === 7}>{favicons[k]}</Tab>)}
        <ActiveTab><Svg s={16} vb="0 0 16 16"><path d="M1.500 1.500l13 13M14.500 1.500l-13 13" stroke="#1f1f1f" strokeWidth="2.800" /></Svg></ActiveTab>
        <Tab $w={84}><Heart gray /></Tab>
        <Tab $w={84}><Brain /></Tab>
        <NewTab><Svg s={20} vb="0 0 20 20"><path d="M10 0v20M0 10h20" stroke="#26211f" strokeWidth="3" /></Svg></NewTab>
        <WindowControls>
          <Svg s={20} vb="0 0 20 20"><path d="M0 10h20" stroke="#000" strokeWidth="2" /></Svg>
          <Svg s={20} vb="0 0 20 20"><rect x="1" y="5" width="14" height="14" rx="3" stroke="#000" strokeWidth="2" /><path d="M5 1.200h8q6 0 6 6V15" stroke="#000" strokeWidth="2" /></Svg>
          <Svg s={20} vb="0 0 20 20"><path d="M0 0l20 20M20 0 0 20" stroke="#000" strokeWidth="2" /></Svg>
        </WindowControls>
      </TabStrip>

      <ToolbarBack>
        <Toolbar>
          <NavButtons>
            <Svg s={24} vb="0 0 24 24"><path d="M24 12H2M12.500 1.500 2 12l10.500 10.500" stroke="#1f1f1f" strokeWidth="2.800" /></Svg>
            <Svg s={24} vb="0 0 24 24"><path d="M0 12h22M11.500 1.500 22 12 11.500 22.500" stroke="#9b9b9b" strokeWidth="2.800" /></Svg>
            <Svg s={24} vb="0 0 24 24"><path d="M21.500 16A10.300 10.300 0 1 1 20 5.500L22.500 9M22.700 0v9.500H14" stroke="#1f1f1f" strokeWidth="2.800" /></Svg>
          </NavButtons>
          <AddressBar>
            <SiteInfo>
              <Svg s={26} vb="0 0 26 26"><circle cx="6" cy="6" r="4" stroke="#1f1f1f" strokeWidth="2.600" /><path d="M13 6h12M1 20h10" stroke="#1f1f1f" strokeWidth="2.600" /><circle cx="19.500" cy="20" r="4" stroke="#1f1f1f" strokeWidth="2.600" /></Svg>
            </SiteInfo>
            <Url><b>us16.admin.mailchimp.com</b>/email/editor?id=13436052</Url>
            <Svg s={32} vb="0 0 32 32"><path d="M16 3.500l3.700 8.700 9.300.8-7 6.200 2.100 9.200L16 23.500l-8.100 4.900L10 19.200 3 13l9.300-.8z" stroke="#555a5f" strokeWidth="2.800" /></Svg>
          </AddressBar>
          <Extensions>{exts.map((e, i) => <Ext key={i}>{e}</Ext>)}</Extensions>
          <ToolbarRule />
          <Avatar />
          <Spacer />
          <Svg s={6} h={28} vb="0 0 6 28"><circle cx="3" cy="3" r="3" fill="#1f1f1f" /><circle cx="3" cy="14" r="3" fill="#1f1f1f" /><circle cx="3" cy="25" r="3" fill="#1f1f1f" /></Svg>
        </Toolbar>
      </ToolbarBack>

      <Header>
        <Brand><SiMailchimp size={76} color="#000" /></Brand>
        <Label $size={40} $weight={600} $ls={-0.3}>Untitled</Label>
        <Spacer />
        <Label $size={28} $ls={-0.35} $color="#6f7174">Changes saved</Label>
        <OutlineButton><Label $size={28}>Send test</Label></OutlineButton>
        <SplitButton>
          <SplitPart $w={222}><Label $size={28} $ls={-0.08}>Save and exit</Label></SplitPart>
          <SplitPart $w={64}><Chevron w={19} h={12} sw={2.6} color="#fff" /></SplitPart>
        </SplitButton>
      </Header>

      <Body>
        <Rail>
          <RailItem $kind="top">
            <Svg s={48} vb="0 0 48 48"><circle cx="24" cy="24" r="18" stroke={ink} strokeWidth="4" /><path d="M24 17.500v13M17.500 24h13" stroke={ink} strokeWidth="4" strokeLinecap="round" /></Svg>
            Add
          </RailItem>
          <RailItem $kind="active">
            <Svg s={48} vb="0 0 48 48"><path d="M16 7l9 17" stroke={teal} strokeWidth="4" strokeLinecap="round" /><path d="M23 8.500 9 22.500q-3 3 0 6L17 38q3 3 6 0L38 23.500q2-2 0-4L27 8.500q-2-2-4 0z" stroke={teal} strokeWidth="3.600" /><path d="M8 24l13-5 15 7-13 13q-3 2-6 0L8 28z" fill={teal} /><circle cx="26" cy="22" r="3" fill={teal} /><path d="M39 33q5 6 4 9-1 3-4 3t-4-3q-1-3 4-9z" fill={teal} /></Svg>
            Styles
          </RailItem>
          <RailItem $kind="rest">
            <Svg s={48} vb="0 0 48 48"><path d="M14 42.500A20 20 0 1 1 34 42.500z" stroke={ink} strokeWidth="4" strokeLinejoin="round" /><path d="M24 7v7M12 13l3.500 4M36 13l-3.500 4M5 27h6M43 27h-6M24 33l7-8" stroke={ink} strokeWidth="4" strokeLinecap="round" /><circle cx="24" cy="33" r="4" fill={ink} /></Svg>
            Optimize
          </RailItem>
        </Rail>

        <Panel>
          <Form>
            <ClippedSwatch $w={74} $h={74} $color="#dfa598" />
            <FieldTitle $top={78} $ls={0.6}>Button border</FieldTitle>
            <Row $top={40}>
              <Select $w={554} $pl={20} $pr={21}>
                <SelectText $size={31} $drop={8}>Solid</SelectText>
                <Chevron w={25} h={15} sw={4} />
              </Select>
            </Row>
            <Row $top={30} $between>
              <NumberField $w={450}><NumberInput $focus><Label $size={31}>2</Label></NumberInput><Steps /></NumberField>
              <RaisedSwatch $w={72} $h={75} $color="#1e2f35" />
            </Row>
            <FieldTitle $top={68} $ls={0.6}>Button font</FieldTitle>
            <Row $top={32} $between>
              <Row $top={0}>
                <Select $w={280} $pl={24} $pr={26}><Label $size={25}>Work Sans</Label><Chevron w={12} h={8} sw={3} /></Select>
                <NumberField $w={168}><NumberInput><Label $size={26}>16</Label></NumberInput><Steps /></NumberField>
              </Row>
              <RaisedSwatch $w={75} $h={75} $color="#000" />
            </Row>
            <Row $top={24} $gap={24}>
              <Group $w={220}>
                <GroupItem><Svg s={32} vb="0 0 32 32"><path d="M6.500 2.500H17q7 0 7 6.500t-7 6.500H6.500M17 15.500q8.500 0 8.500 7T17 29.500H6.500v-27" stroke={ink} strokeWidth="3.600" /></Svg></GroupItem>
                <GroupItem><Svg s={32} vb="0 0 32 32"><path d="M10 2.500h18M4 29.500h18M19 2.500l-6 27" stroke={ink} strokeWidth="3.400" strokeLinecap="round" /></Svg></GroupItem>
                <GroupItem><Svg s={32} vb="0 0 32 32"><path d="M7 1v11q0 10 9 10t9-10V1M3 29.500h26" stroke={ink} strokeWidth="3.200" /></Svg></GroupItem>
              </Group>
              <Group $w={288}>
                <GroupItem><AlignIcon rows={[[0, 20], [0, 34], [0, 20], [0, 34]]} /></GroupItem>
                <GroupItem $on><AlignIcon color={teal} rows={[[7, 20], [0, 34], [7, 20], [0, 34]]} /></GroupItem>
                <GroupItem><AlignIcon rows={[[14, 20], [0, 34], [14, 20], [0, 34]]} /></GroupItem>
                <GroupItem><AlignIcon rows={[[0, 34], [0, 34], [0, 34], [0, 34]]} /></GroupItem>
              </Group>
            </Row>
            <FieldTitle $top={60} $ls={-0.2}>Letter spacing</FieldTitle>
            <Row $top={24}>
              <NumberField $w={554}><NumberInput><Label $size={31}>0</Label></NumberInput><Steps /></NumberField>
            </Row>
          </Form>
          <PanelFooter>
            <UpgradeShade>
              <UpgradeButton><Label $size={28}>Upgrade</Label></UpgradeButton>
            </UpgradeShade>
          </PanelFooter>
        </Panel>

        <Workspace>
          <CanvasBar>
            <DeviceToggle>
              <Device $on><Svg s={40} vb="0 0 40 40"><rect x="2" y="2" width="36" height="28" rx="4" stroke="#007f8a" strokeWidth="4" /><path d="M20 30v8M8 38h24" stroke="#007f8a" strokeWidth="4" strokeLinecap="round" /><path d="M8 13q0-4 4-4" stroke="#007f8a" strokeWidth="3.500" strokeLinecap="round" /></Svg></Device>
              <Device><Svg s={30} h={40} vb="0 0 30 40"><rect x="3" y="2" width="24" height="36" rx="4" stroke={ink} strokeWidth="4" /><path d="M9 2h12v6H9z" fill={ink} /></Svg></Device>
            </DeviceToggle>
            <Spacer />
            <History>
              <Svg s={32} vb="0 0 32 32"><path d="M9 3 3.500 9 9 15M4 9h16q9 0 9 8.500T20 26H9" stroke={ink} strokeWidth="3.200" strokeLinecap="round" /></Svg>
              <Svg s={32} vb="0 0 32 32"><path d="M23 3l5.500 6L23 15M28 9H12q-9 0-9 8.500T12 26h11" stroke={ink} strokeWidth="3.200" strokeLinecap="round" /></Svg>
              <Svg s={36} vb="0 0 36 36"><path d="M6 3h24q4 0 4 4v17q0 4-4 4h-8l-4 5-4-5H6q-4 0-4-4V7q0-4 4-4z" stroke={ink} strokeWidth="3.400" strokeLinejoin="round" /></Svg>
            </History>
            <PreviewButton><Label $size={28}>Preview</Label></PreviewButton>
          </CanvasBar>
          <Viewport>
            <ScrollTrack>
              <Thumb $top={570} $h={273} />
              <TrackEnd><Triangle /></TrackEnd>
            </ScrollTrack>
            <Stage>
              <EmailBack>
                <Email>
                  <SocialRow>
                    <Social><FaFacebookF size={45} /></Social>
                    <Social><FaInstagram size={45} /></Social>
                    <Social><Svg s={38} vb="0 0 38 38"><path d="M3 2h8l24 34h-8z" stroke="#dfa598" strokeWidth="2.400" /><path d="M34 1.500 21 16M16.500 21.500 3.500 36.500" stroke="#dfa598" strokeWidth="2.600" /></Svg></Social>
                  </SocialRow>
                  <LogoCard><BlwLogo /></LogoCard>
                  <FooterText>
                    <TextLine $ls={0.94} $italic>Copyright (C) *|CURRENT_YEAR|* *|LIST:COMPANY|*. All rights reserved.</TextLine>
                    <TextLine $ls={0.93}>*|IFNOT:ARCHIVE_PAGE|**|LIST:DESCRIPTION|**|END:IF|*</TextLine>
                    <TextLine $ls={0}>&nbsp;</TextLine>
                    <TextLine $ls={1.4}>Our mailing address is:</TextLine>
                    <TextLine $ls={0.98}>*|IFNOT:ARCHIVE_PAGE|**|HTML:LIST_ADDRESS|**|END:IF|*</TextLine>
                    <TextLine $ls={0}>&nbsp;</TextLine>
                    <TextLine $ls={1.48}>Want to change how you receive these emails?</TextLine>
                    <TextLine $ls={1.4}>You can <Link>update your preferences</Link> or <Link>unsubscribe</Link></TextLine>
                  </FooterText>
                  <MailchimpBadge><BadgeArt /></MailchimpBadge>
                </Email>
              </EmailBack>
              <SelectionFrame />
              <SelectionTag><Label $size={28}>Footer</Label></SelectionTag>
              <HelpBar>
                <DarkButton $w={236}><Label $size={28} $ls={-0.1}>Give feedback</Label></DarkButton>
                <DarkButton $w={67} $ring><Label $size={36}>?</Label></DarkButton>
              </HelpBar>
            </Stage>
          </Viewport>
        </Workspace>

        <ScrollTrack>
          <TrackStart><Triangle up /></TrackStart>
          <Thumb $top={619} $h={372} />
          <TrackEnd><Triangle /></TrackEnd>
        </ScrollTrack>
        <Assistant>
          <Svg s={38} vb="0 0 38 38"><path d="M14 5q2 12 14 14-12 2-14 14Q12 21 0 19 12 17 14 5zM31 0q1 6 7 7-6 1-7 7-1-6-7-7 6-1 7-7zM31 24q1 6 7 7-6 1-7 7-1-6-7-7 6-1 7-7z" fill="#222" /></Svg>
        </Assistant>
      </Body>

      <Taskbar>
        <Ic><rect x="0" y="2" width="48" height="44" rx="3" fill="#0d66b8" /><rect x="4" y="6" width="18" height="36" rx="2" fill="#f6f6f6" /><path d="M26 6h18v20H26z" fill="#63d3fb" /><path d="M26 26h18v8H26z" fill="#1da2f5" /><path d="M26 34h18v8H26z" fill="#0a84ec" /></Ic>
        <Apps>
          {apps.map((a, i) => (
            <AppSlot key={i} $active={a.active}>
              {a.icon}
              {a.run && <Running $active={a.active} />}
              {a.count && <AppCount>{a.count}</AppCount>}
            </AppSlot>
          ))}
        </Apps>
        <Tray>
          <TrayIcon $ml={0}><Chevron w={26} h={15} sw={2} up color="#fff" /></TrayIcon>
          <TrayIcon $ml={34}><Svg s={34} h={30} vb="0 0 34 30"><path d="M7 26a7 7 0 0 1 0-13q1-8 9-9 8 1 9 8 8 1 8 7t-6 7z" fill="#9aa2b5" /><path d="M13 7q7-7 12 4 0 3-4 3z" fill="#5f6c8c" /><path d="M5 3l24 26" stroke="#fff" strokeWidth="2.400" /></Svg></TrayIcon>
          <TrayIcon $ml={30}><Svg s={34} h={30} vb="0 0 34 30"><path d="M7 24a6 6 0 0 1 0-12q1-8 9-9 8 1 10 8l2 13z" fill="#d6dae2" /><path d="M12 6q8-7 14 3v6H16z" fill="#8e98ad" /><circle cx="24" cy="20" r="9.500" fill="#5bcbff" /><path d="M24 19v6M24 14v2.500" stroke="#0b1d3c" strokeWidth="2.400" /></Svg></TrayIcon>
          <TrayIcon $ml={31}><Svg s={34} h={34} vb="0 0 34 34"><path d="M2 17Q3 3 16 3q8 0 13 7M30 2v9h-9M3 33V24h9M4 25q4 6 10 7" stroke="#fff" strokeWidth="2.400" /><circle cx="25" cy="25" r="8" fill="#f00" /></Svg></TrayIcon>
          <TrayIcon $ml={30}><Svg s={34} h={28} vb="0 0 34 28"><path d="M2 10q15-14 30 0M7 15q10-9 20 0M12 20q5-4 10 0" stroke="#fff" strokeWidth="2.600" /><circle cx="17" cy="24" r="3" fill="#fff" /></Svg></TrayIcon>
          <TrayIcon $ml={14}><Svg s={34} h={28} vb="0 0 34 28"><path d="M1.500 10h5l7-7v22l-7-7h-5zM18 9q4 5 0 10M22.500 5.500q7 8 0 17M27 2q10 12 0 24" stroke="#fff" strokeWidth="2.400" /></Svg></TrayIcon>
          <Clock><Label $size={23} $ls={-0.75}>3:14 AM</Label><Label $size={23} $ls={-0.3}>7/19/2025</Label></Clock>
          <Notice>10</Notice>
        </Tray>
      </Taskbar>
    </Page>
  );
}
